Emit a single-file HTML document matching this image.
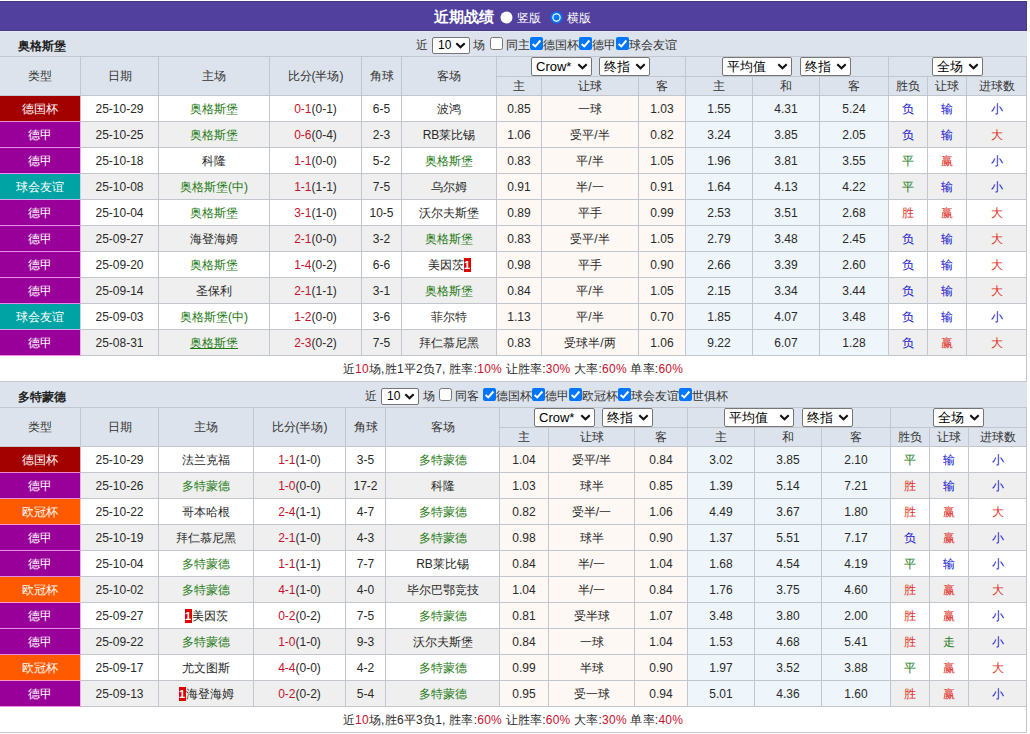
<!DOCTYPE html>
<html><head><meta charset="utf-8"><title>近期战绩</title><style>
*{box-sizing:border-box}
html,body{margin:0;padding:0;background:#fff}
body{width:1030px;height:734px;overflow:hidden;position:relative;font-family:"Liberation Sans",sans-serif;font-size:12px;color:#2a2a2a}
.bar{position:absolute;left:0;top:1px;width:1027px;height:30px;background:#52409e;border:1px solid #463a80;border-left:none}
.lav{position:absolute;left:0;top:31px;width:1027px;height:1px;background:#e6e6fa}
.bt{position:absolute;font-size:15px;font-weight:bold;line-height:28px;color:#fff;white-space:nowrap}
.rd{position:absolute;width:13px;height:13px}
.rd svg{display:block}
.rt{position:absolute;font-size:12px;line-height:13px;color:#fff;white-space:nowrap}
.c{position:absolute;border-right:1px solid #c2c7cd;border-bottom:1px solid #c2c7cd;text-align:center;white-space:nowrap;overflow:hidden}
.band{border-right:none}
.h{color:#333}
.lg{color:#fff;border-bottom-color:rgba(255,170,255,.8);border-right-color:rgba(255,235,255,.75)}
.g{color:#1f7a14}
.u{text-decoration:underline}
.sum{letter-spacing:0.23px}
.sc{color:#c8102e}
.sr{color:#c8102e}
.rc{display:inline-block;background:#e00000;color:#fff;font-weight:bold;font-size:11px;line-height:14px;height:14px;width:7px;text-align:center;vertical-align:middle;position:relative;top:-1px}
.tn{position:absolute;font-weight:bold;font-size:12px;color:#222;white-space:nowrap}
.ft{position:absolute;white-space:nowrap;color:#333;line-height:25px}
.sel{background:#fff;border:1px solid #767676;border-radius:2px;color:#000;white-space:nowrap;overflow:hidden}
.sel{position:absolute;text-align:left;padding-left:4px}
.chev{position:absolute;right:3px;top:50%;margin-top:-4px}
.sm .st{padding-left:1px}
.cb{position:absolute;width:13px;height:13px}
.cb svg{display:block}
</style></head>
<body>
<div class="bar"></div><div class="bt" style="left:434px;top:3px">近期战绩</div><div class="rd" style="left:500px;top:11px"><svg width="13" height="13" viewBox="0 0 13 13"><circle cx="6.5" cy="6.5" r="6" fill="#fff"/></svg></div><div class="rt" style="left:517px;top:12px">竖版</div><div class="rd" style="left:550px;top:11px"><svg width="13" height="13" viewBox="0 0 13 13"><circle cx="6.5" cy="6.5" r="6" fill="#0075ff"/><circle cx="6.5" cy="6.5" r="4.2" fill="#fff"/><circle cx="6.5" cy="6.5" r="3" fill="#0075ff"/></svg></div><div class="rt" style="left:567px;top:12px">横版</div>
<div class="c band" style="left:0px;top:31px;width:1027px;height:26px;line-height:26px;background:#dde3ec;border-right:none;width:1027px;"></div><div class="tn" style="left:18px;top:34px;height:25px;line-height:25px">奥格斯堡</div><div class="ft" style="left:416px;top:33px">近</div><div class="sel sm" style="left:432px;top:37px;width:38px;height:17px;line-height:15px;font-size:12px"><span class="st">10</span><svg class="chev" width="11" height="7" viewBox="0 0 11 7"><path d="M1.3 1.3 L5.5 5.3 L9.7 1.3" fill="none" stroke="#111" stroke-width="2.1"/></svg></div><div class="ft" style="left:473px;top:33px">场</div><div class="cb" style="left:490px;top:37px"><svg width="13" height="13" viewBox="0 0 13 13"><rect x="0.5" y="0.5" width="12" height="12" rx="2" fill="#fff" stroke="#767676"/></svg></div><div class="ft" style="left:506px;top:33px">同主</div><div class="cb" style="left:530px;top:37px"><svg width="13" height="13" viewBox="0 0 13 13"><rect x="0" y="0" width="13" height="13" rx="2" fill="#0075ff"/><path d="M2.6 6.9 L5.3 9.4 L10.4 3.5" fill="none" stroke="#fff" stroke-width="2"/></svg></div><div class="ft" style="left:543px;top:33px">德国杯</div><div class="cb" style="left:579px;top:37px"><svg width="13" height="13" viewBox="0 0 13 13"><rect x="0" y="0" width="13" height="13" rx="2" fill="#0075ff"/><path d="M2.6 6.9 L5.3 9.4 L10.4 3.5" fill="none" stroke="#fff" stroke-width="2"/></svg></div><div class="ft" style="left:592px;top:33px">德甲</div><div class="cb" style="left:616px;top:37px"><svg width="13" height="13" viewBox="0 0 13 13"><rect x="0" y="0" width="13" height="13" rx="2" fill="#0075ff"/><path d="M2.6 6.9 L5.3 9.4 L10.4 3.5" fill="none" stroke="#fff" stroke-width="2"/></svg></div><div class="ft" style="left:629px;top:33px">球会友谊</div><div class="c h" style="left:0px;top:57px;width:81px;height:39px;line-height:39px;background:#dde3ec;">类型</div><div class="c h" style="left:81px;top:57px;width:78px;height:39px;line-height:39px;background:#dde3ec;">日期</div><div class="c h" style="left:159px;top:57px;width:111px;height:39px;line-height:39px;background:#dde3ec;">主场</div><div class="c h" style="left:270px;top:57px;width:92px;height:39px;line-height:39px;background:#dde3ec;">比分(半场)</div><div class="c h" style="left:362px;top:57px;width:40px;height:39px;line-height:39px;background:#dde3ec;">角球</div><div class="c h" style="left:402px;top:57px;width:95px;height:39px;line-height:39px;background:#dde3ec;">客场</div><div class="c h" style="left:497px;top:57px;width:189px;height:20px;line-height:20px;background:#dde3ec;"></div><div class="c h" style="left:686px;top:57px;width:203px;height:20px;line-height:20px;background:#dde3ec;"></div><div class="c h" style="left:889px;top:57px;width:138px;height:20px;line-height:20px;background:#dde3ec;"></div><div class="c h" style="left:497px;top:77px;width:45px;height:19px;line-height:19px;background:#dde3ec;">主</div><div class="c h" style="left:542px;top:77px;width:97px;height:19px;line-height:19px;background:#dde3ec;">让球</div><div class="c h" style="left:639px;top:77px;width:47px;height:19px;line-height:19px;background:#dde3ec;">客</div><div class="c h" style="left:686px;top:77px;width:67px;height:19px;line-height:19px;background:#dde3ec;">主</div><div class="c h" style="left:753px;top:77px;width:67px;height:19px;line-height:19px;background:#dde3ec;">和</div><div class="c h" style="left:820px;top:77px;width:69px;height:19px;line-height:19px;background:#dde3ec;">客</div><div class="c h" style="left:889px;top:77px;width:39px;height:19px;line-height:19px;background:#dde3ec;">胜负</div><div class="c h" style="left:928px;top:77px;width:39px;height:19px;line-height:19px;background:#dde3ec;">让球</div><div class="c h" style="left:967px;top:77px;width:60px;height:19px;line-height:19px;background:#dde3ec;">进球数</div><div class="sel" style="left:531px;top:57px;width:61px;height:19px;line-height:17px;font-size:13px"><span class="st">Crow*</span><svg class="chev" width="11" height="7" viewBox="0 0 11 7"><path d="M1.3 1.3 L5.5 5.3 L9.7 1.3" fill="none" stroke="#111" stroke-width="2.1"/></svg></div><div class="sel" style="left:599px;top:57px;width:51px;height:19px;line-height:17px;font-size:13px"><span class="st">终指</span><svg class="chev" width="11" height="7" viewBox="0 0 11 7"><path d="M1.3 1.3 L5.5 5.3 L9.7 1.3" fill="none" stroke="#111" stroke-width="2.1"/></svg></div><div class="sel" style="left:722px;top:57px;width:70px;height:19px;line-height:17px;font-size:13px"><span class="st">平均值</span><svg class="chev" width="11" height="7" viewBox="0 0 11 7"><path d="M1.3 1.3 L5.5 5.3 L9.7 1.3" fill="none" stroke="#111" stroke-width="2.1"/></svg></div><div class="sel" style="left:800px;top:57px;width:51px;height:19px;line-height:17px;font-size:13px"><span class="st">终指</span><svg class="chev" width="11" height="7" viewBox="0 0 11 7"><path d="M1.3 1.3 L5.5 5.3 L9.7 1.3" fill="none" stroke="#111" stroke-width="2.1"/></svg></div><div class="sel" style="left:932px;top:57px;width:51px;height:19px;line-height:17px;font-size:13px"><span class="st">全场</span><svg class="chev" width="11" height="7" viewBox="0 0 11 7"><path d="M1.3 1.3 L5.5 5.3 L9.7 1.3" fill="none" stroke="#111" stroke-width="2.1"/></svg></div><div class="c lg" style="left:0px;top:96px;width:81px;height:26px;line-height:26px;background:#a30000;">德国杯</div><div class="c" style="left:81px;top:96px;width:78px;height:26px;line-height:26px;background:#ffffff;">25-10-29</div><div class="c" style="left:159px;top:96px;width:111px;height:26px;line-height:26px;background:#ffffff;"><span class="g">奥格斯堡</span></div><div class="c" style="left:270px;top:96px;width:92px;height:26px;line-height:26px;background:#ffffff;"><span class="sc">0-1</span>(0-1)</div><div class="c" style="left:362px;top:96px;width:40px;height:26px;line-height:26px;background:#ffffff;">6-5</div><div class="c" style="left:402px;top:96px;width:95px;height:26px;line-height:26px;background:#ffffff;">波鸿</div><div class="c" style="left:497px;top:96px;width:45px;height:26px;line-height:26px;background:#fdf8f4;">0.85</div><div class="c" style="left:542px;top:96px;width:97px;height:26px;line-height:26px;background:#fdf8f4;">一球</div><div class="c" style="left:639px;top:96px;width:47px;height:26px;line-height:26px;background:#fdf8f4;">1.03</div><div class="c" style="left:686px;top:96px;width:67px;height:26px;line-height:26px;background:#eef6fb;">1.55</div><div class="c" style="left:753px;top:96px;width:67px;height:26px;line-height:26px;background:#eef6fb;">4.31</div><div class="c" style="left:820px;top:96px;width:69px;height:26px;line-height:26px;background:#eef6fb;">5.24</div><div class="c" style="left:889px;top:96px;width:39px;height:26px;line-height:26px;background:#ffffff;"><span style="color:#1414c8">负</span></div><div class="c" style="left:928px;top:96px;width:39px;height:26px;line-height:26px;background:#ffffff;"><span style="color:#1414c8">输</span></div><div class="c" style="left:967px;top:96px;width:60px;height:26px;line-height:26px;background:#ffffff;"><span style="color:#1414c8">小</span></div><div class="c lg" style="left:0px;top:122px;width:81px;height:26px;line-height:26px;background:#990099;">德甲</div><div class="c" style="left:81px;top:122px;width:78px;height:26px;line-height:26px;background:#efefef;">25-10-25</div><div class="c" style="left:159px;top:122px;width:111px;height:26px;line-height:26px;background:#efefef;"><span class="g">奥格斯堡</span></div><div class="c" style="left:270px;top:122px;width:92px;height:26px;line-height:26px;background:#efefef;"><span class="sc">0-6</span>(0-4)</div><div class="c" style="left:362px;top:122px;width:40px;height:26px;line-height:26px;background:#efefef;">2-3</div><div class="c" style="left:402px;top:122px;width:95px;height:26px;line-height:26px;background:#efefef;">RB莱比锡</div><div class="c" style="left:497px;top:122px;width:45px;height:26px;line-height:26px;background:#fdf8f4;">1.06</div><div class="c" style="left:542px;top:122px;width:97px;height:26px;line-height:26px;background:#fdf8f4;">受平/半</div><div class="c" style="left:639px;top:122px;width:47px;height:26px;line-height:26px;background:#fdf8f4;">0.82</div><div class="c" style="left:686px;top:122px;width:67px;height:26px;line-height:26px;background:#eef6fb;">3.24</div><div class="c" style="left:753px;top:122px;width:67px;height:26px;line-height:26px;background:#eef6fb;">3.85</div><div class="c" style="left:820px;top:122px;width:69px;height:26px;line-height:26px;background:#eef6fb;">2.05</div><div class="c" style="left:889px;top:122px;width:39px;height:26px;line-height:26px;background:#efefef;"><span style="color:#1414c8">负</span></div><div class="c" style="left:928px;top:122px;width:39px;height:26px;line-height:26px;background:#efefef;"><span style="color:#1414c8">输</span></div><div class="c" style="left:967px;top:122px;width:60px;height:26px;line-height:26px;background:#efefef;"><span style="color:#e0301e">大</span></div><div class="c lg" style="left:0px;top:148px;width:81px;height:26px;line-height:26px;background:#990099;">德甲</div><div class="c" style="left:81px;top:148px;width:78px;height:26px;line-height:26px;background:#ffffff;">25-10-18</div><div class="c" style="left:159px;top:148px;width:111px;height:26px;line-height:26px;background:#ffffff;">科隆</div><div class="c" style="left:270px;top:148px;width:92px;height:26px;line-height:26px;background:#ffffff;"><span class="sc">1-1</span>(0-0)</div><div class="c" style="left:362px;top:148px;width:40px;height:26px;line-height:26px;background:#ffffff;">5-2</div><div class="c" style="left:402px;top:148px;width:95px;height:26px;line-height:26px;background:#ffffff;"><span class="g">奥格斯堡</span></div><div class="c" style="left:497px;top:148px;width:45px;height:26px;line-height:26px;background:#fdf8f4;">0.83</div><div class="c" style="left:542px;top:148px;width:97px;height:26px;line-height:26px;background:#fdf8f4;">平/半</div><div class="c" style="left:639px;top:148px;width:47px;height:26px;line-height:26px;background:#fdf8f4;">1.05</div><div class="c" style="left:686px;top:148px;width:67px;height:26px;line-height:26px;background:#eef6fb;">1.96</div><div class="c" style="left:753px;top:148px;width:67px;height:26px;line-height:26px;background:#eef6fb;">3.81</div><div class="c" style="left:820px;top:148px;width:69px;height:26px;line-height:26px;background:#eef6fb;">3.55</div><div class="c" style="left:889px;top:148px;width:39px;height:26px;line-height:26px;background:#ffffff;"><span style="color:#1a7a1a">平</span></div><div class="c" style="left:928px;top:148px;width:39px;height:26px;line-height:26px;background:#ffffff;"><span style="color:#e0301e">赢</span></div><div class="c" style="left:967px;top:148px;width:60px;height:26px;line-height:26px;background:#ffffff;"><span style="color:#1414c8">小</span></div><div class="c lg" style="left:0px;top:174px;width:81px;height:26px;line-height:26px;background:#00a3a3;">球会友谊</div><div class="c" style="left:81px;top:174px;width:78px;height:26px;line-height:26px;background:#efefef;">25-10-08</div><div class="c" style="left:159px;top:174px;width:111px;height:26px;line-height:26px;background:#efefef;"><span class="g">奥格斯堡(中)</span></div><div class="c" style="left:270px;top:174px;width:92px;height:26px;line-height:26px;background:#efefef;"><span class="sc">1-1</span>(1-1)</div><div class="c" style="left:362px;top:174px;width:40px;height:26px;line-height:26px;background:#efefef;">7-5</div><div class="c" style="left:402px;top:174px;width:95px;height:26px;line-height:26px;background:#efefef;">乌尔姆</div><div class="c" style="left:497px;top:174px;width:45px;height:26px;line-height:26px;background:#fdf8f4;">0.91</div><div class="c" style="left:542px;top:174px;width:97px;height:26px;line-height:26px;background:#fdf8f4;">半/一</div><div class="c" style="left:639px;top:174px;width:47px;height:26px;line-height:26px;background:#fdf8f4;">0.91</div><div class="c" style="left:686px;top:174px;width:67px;height:26px;line-height:26px;background:#eef6fb;">1.64</div><div class="c" style="left:753px;top:174px;width:67px;height:26px;line-height:26px;background:#eef6fb;">4.13</div><div class="c" style="left:820px;top:174px;width:69px;height:26px;line-height:26px;background:#eef6fb;">4.22</div><div class="c" style="left:889px;top:174px;width:39px;height:26px;line-height:26px;background:#efefef;"><span style="color:#1a7a1a">平</span></div><div class="c" style="left:928px;top:174px;width:39px;height:26px;line-height:26px;background:#efefef;"><span style="color:#1414c8">输</span></div><div class="c" style="left:967px;top:174px;width:60px;height:26px;line-height:26px;background:#efefef;"><span style="color:#1414c8">小</span></div><div class="c lg" style="left:0px;top:200px;width:81px;height:26px;line-height:26px;background:#990099;">德甲</div><div class="c" style="left:81px;top:200px;width:78px;height:26px;line-height:26px;background:#ffffff;">25-10-04</div><div class="c" style="left:159px;top:200px;width:111px;height:26px;line-height:26px;background:#ffffff;"><span class="g">奥格斯堡</span></div><div class="c" style="left:270px;top:200px;width:92px;height:26px;line-height:26px;background:#ffffff;"><span class="sc">3-1</span>(1-0)</div><div class="c" style="left:362px;top:200px;width:40px;height:26px;line-height:26px;background:#ffffff;">10-5</div><div class="c" style="left:402px;top:200px;width:95px;height:26px;line-height:26px;background:#ffffff;">沃尔夫斯堡</div><div class="c" style="left:497px;top:200px;width:45px;height:26px;line-height:26px;background:#fdf8f4;">0.89</div><div class="c" style="left:542px;top:200px;width:97px;height:26px;line-height:26px;background:#fdf8f4;">平手</div><div class="c" style="left:639px;top:200px;width:47px;height:26px;line-height:26px;background:#fdf8f4;">0.99</div><div class="c" style="left:686px;top:200px;width:67px;height:26px;line-height:26px;background:#eef6fb;">2.53</div><div class="c" style="left:753px;top:200px;width:67px;height:26px;line-height:26px;background:#eef6fb;">3.51</div><div class="c" style="left:820px;top:200px;width:69px;height:26px;line-height:26px;background:#eef6fb;">2.68</div><div class="c" style="left:889px;top:200px;width:39px;height:26px;line-height:26px;background:#ffffff;"><span style="color:#e0301e">胜</span></div><div class="c" style="left:928px;top:200px;width:39px;height:26px;line-height:26px;background:#ffffff;"><span style="color:#e0301e">赢</span></div><div class="c" style="left:967px;top:200px;width:60px;height:26px;line-height:26px;background:#ffffff;"><span style="color:#e0301e">大</span></div><div class="c lg" style="left:0px;top:226px;width:81px;height:26px;line-height:26px;background:#990099;">德甲</div><div class="c" style="left:81px;top:226px;width:78px;height:26px;line-height:26px;background:#efefef;">25-09-27</div><div class="c" style="left:159px;top:226px;width:111px;height:26px;line-height:26px;background:#efefef;">海登海姆</div><div class="c" style="left:270px;top:226px;width:92px;height:26px;line-height:26px;background:#efefef;"><span class="sc">2-1</span>(0-0)</div><div class="c" style="left:362px;top:226px;width:40px;height:26px;line-height:26px;background:#efefef;">3-2</div><div class="c" style="left:402px;top:226px;width:95px;height:26px;line-height:26px;background:#efefef;"><span class="g">奥格斯堡</span></div><div class="c" style="left:497px;top:226px;width:45px;height:26px;line-height:26px;background:#fdf8f4;">0.83</div><div class="c" style="left:542px;top:226px;width:97px;height:26px;line-height:26px;background:#fdf8f4;">受平/半</div><div class="c" style="left:639px;top:226px;width:47px;height:26px;line-height:26px;background:#fdf8f4;">1.05</div><div class="c" style="left:686px;top:226px;width:67px;height:26px;line-height:26px;background:#eef6fb;">2.79</div><div class="c" style="left:753px;top:226px;width:67px;height:26px;line-height:26px;background:#eef6fb;">3.48</div><div class="c" style="left:820px;top:226px;width:69px;height:26px;line-height:26px;background:#eef6fb;">2.45</div><div class="c" style="left:889px;top:226px;width:39px;height:26px;line-height:26px;background:#efefef;"><span style="color:#1414c8">负</span></div><div class="c" style="left:928px;top:226px;width:39px;height:26px;line-height:26px;background:#efefef;"><span style="color:#1414c8">输</span></div><div class="c" style="left:967px;top:226px;width:60px;height:26px;line-height:26px;background:#efefef;"><span style="color:#e0301e">大</span></div><div class="c lg" style="left:0px;top:252px;width:81px;height:26px;line-height:26px;background:#990099;">德甲</div><div class="c" style="left:81px;top:252px;width:78px;height:26px;line-height:26px;background:#ffffff;">25-09-20</div><div class="c" style="left:159px;top:252px;width:111px;height:26px;line-height:26px;background:#ffffff;"><span class="g">奥格斯堡</span></div><div class="c" style="left:270px;top:252px;width:92px;height:26px;line-height:26px;background:#ffffff;"><span class="sc">1-4</span>(0-2)</div><div class="c" style="left:362px;top:252px;width:40px;height:26px;line-height:26px;background:#ffffff;">6-6</div><div class="c" style="left:402px;top:252px;width:95px;height:26px;line-height:26px;background:#ffffff;">美因茨<span class="rc">1</span></div><div class="c" style="left:497px;top:252px;width:45px;height:26px;line-height:26px;background:#fdf8f4;">0.98</div><div class="c" style="left:542px;top:252px;width:97px;height:26px;line-height:26px;background:#fdf8f4;">平手</div><div class="c" style="left:639px;top:252px;width:47px;height:26px;line-height:26px;background:#fdf8f4;">0.90</div><div class="c" style="left:686px;top:252px;width:67px;height:26px;line-height:26px;background:#eef6fb;">2.66</div><div class="c" style="left:753px;top:252px;width:67px;height:26px;line-height:26px;background:#eef6fb;">3.39</div><div class="c" style="left:820px;top:252px;width:69px;height:26px;line-height:26px;background:#eef6fb;">2.60</div><div class="c" style="left:889px;top:252px;width:39px;height:26px;line-height:26px;background:#ffffff;"><span style="color:#1414c8">负</span></div><div class="c" style="left:928px;top:252px;width:39px;height:26px;line-height:26px;background:#ffffff;"><span style="color:#1414c8">输</span></div><div class="c" style="left:967px;top:252px;width:60px;height:26px;line-height:26px;background:#ffffff;"><span style="color:#e0301e">大</span></div><div class="c lg" style="left:0px;top:278px;width:81px;height:26px;line-height:26px;background:#990099;">德甲</div><div class="c" style="left:81px;top:278px;width:78px;height:26px;line-height:26px;background:#efefef;">25-09-14</div><div class="c" style="left:159px;top:278px;width:111px;height:26px;line-height:26px;background:#efefef;">圣保利</div><div class="c" style="left:270px;top:278px;width:92px;height:26px;line-height:26px;background:#efefef;"><span class="sc">2-1</span>(1-1)</div><div class="c" style="left:362px;top:278px;width:40px;height:26px;line-height:26px;background:#efefef;">3-1</div><div class="c" style="left:402px;top:278px;width:95px;height:26px;line-height:26px;background:#efefef;"><span class="g">奥格斯堡</span></div><div class="c" style="left:497px;top:278px;width:45px;height:26px;line-height:26px;background:#fdf8f4;">0.84</div><div class="c" style="left:542px;top:278px;width:97px;height:26px;line-height:26px;background:#fdf8f4;">平/半</div><div class="c" style="left:639px;top:278px;width:47px;height:26px;line-height:26px;background:#fdf8f4;">1.05</div><div class="c" style="left:686px;top:278px;width:67px;height:26px;line-height:26px;background:#eef6fb;">2.15</div><div class="c" style="left:753px;top:278px;width:67px;height:26px;line-height:26px;background:#eef6fb;">3.34</div><div class="c" style="left:820px;top:278px;width:69px;height:26px;line-height:26px;background:#eef6fb;">3.44</div><div class="c" style="left:889px;top:278px;width:39px;height:26px;line-height:26px;background:#efefef;"><span style="color:#1414c8">负</span></div><div class="c" style="left:928px;top:278px;width:39px;height:26px;line-height:26px;background:#efefef;"><span style="color:#1414c8">输</span></div><div class="c" style="left:967px;top:278px;width:60px;height:26px;line-height:26px;background:#efefef;"><span style="color:#e0301e">大</span></div><div class="c lg" style="left:0px;top:304px;width:81px;height:26px;line-height:26px;background:#00a3a3;">球会友谊</div><div class="c" style="left:81px;top:304px;width:78px;height:26px;line-height:26px;background:#ffffff;">25-09-03</div><div class="c" style="left:159px;top:304px;width:111px;height:26px;line-height:26px;background:#ffffff;"><span class="g">奥格斯堡(中)</span></div><div class="c" style="left:270px;top:304px;width:92px;height:26px;line-height:26px;background:#ffffff;"><span class="sc">1-2</span>(0-0)</div><div class="c" style="left:362px;top:304px;width:40px;height:26px;line-height:26px;background:#ffffff;">3-6</div><div class="c" style="left:402px;top:304px;width:95px;height:26px;line-height:26px;background:#ffffff;">菲尔特</div><div class="c" style="left:497px;top:304px;width:45px;height:26px;line-height:26px;background:#fdf8f4;">1.13</div><div class="c" style="left:542px;top:304px;width:97px;height:26px;line-height:26px;background:#fdf8f4;">平/半</div><div class="c" style="left:639px;top:304px;width:47px;height:26px;line-height:26px;background:#fdf8f4;">0.70</div><div class="c" style="left:686px;top:304px;width:67px;height:26px;line-height:26px;background:#eef6fb;">1.85</div><div class="c" style="left:753px;top:304px;width:67px;height:26px;line-height:26px;background:#eef6fb;">4.07</div><div class="c" style="left:820px;top:304px;width:69px;height:26px;line-height:26px;background:#eef6fb;">3.48</div><div class="c" style="left:889px;top:304px;width:39px;height:26px;line-height:26px;background:#ffffff;"><span style="color:#1414c8">负</span></div><div class="c" style="left:928px;top:304px;width:39px;height:26px;line-height:26px;background:#ffffff;"><span style="color:#1414c8">输</span></div><div class="c" style="left:967px;top:304px;width:60px;height:26px;line-height:26px;background:#ffffff;"><span style="color:#1414c8">小</span></div><div class="c lg" style="left:0px;top:330px;width:81px;height:26px;line-height:26px;background:#990099;">德甲</div><div class="c" style="left:81px;top:330px;width:78px;height:26px;line-height:26px;background:#efefef;">25-08-31</div><div class="c" style="left:159px;top:330px;width:111px;height:26px;line-height:26px;background:#efefef;"><span class="g u">奥格斯堡</span></div><div class="c" style="left:270px;top:330px;width:92px;height:26px;line-height:26px;background:#efefef;"><span class="sc">2-3</span>(0-2)</div><div class="c" style="left:362px;top:330px;width:40px;height:26px;line-height:26px;background:#efefef;">7-5</div><div class="c" style="left:402px;top:330px;width:95px;height:26px;line-height:26px;background:#efefef;">拜仁慕尼黑</div><div class="c" style="left:497px;top:330px;width:45px;height:26px;line-height:26px;background:#fdf8f4;">0.83</div><div class="c" style="left:542px;top:330px;width:97px;height:26px;line-height:26px;background:#fdf8f4;">受球半/两</div><div class="c" style="left:639px;top:330px;width:47px;height:26px;line-height:26px;background:#fdf8f4;">1.06</div><div class="c" style="left:686px;top:330px;width:67px;height:26px;line-height:26px;background:#eef6fb;">9.22</div><div class="c" style="left:753px;top:330px;width:67px;height:26px;line-height:26px;background:#eef6fb;">6.07</div><div class="c" style="left:820px;top:330px;width:69px;height:26px;line-height:26px;background:#eef6fb;">1.28</div><div class="c" style="left:889px;top:330px;width:39px;height:26px;line-height:26px;background:#efefef;"><span style="color:#1414c8">负</span></div><div class="c" style="left:928px;top:330px;width:39px;height:26px;line-height:26px;background:#efefef;"><span style="color:#e0301e">赢</span></div><div class="c" style="left:967px;top:330px;width:60px;height:26px;line-height:26px;background:#efefef;"><span style="color:#e0301e">大</span></div><div class="c sum" style="left:0px;top:356px;width:1027px;height:26px;line-height:26px;background:#ffffff;">近<span class="sr">10</span>场,胜1平2负7, 胜率:<span class="sr">10%</span> 让胜率:<span class="sr">30%</span> 大率:<span class="sr">60%</span> 单率:<span class="sr">60%</span></div><div class="c band" style="left:0px;top:382px;width:1027px;height:26px;line-height:26px;background:#dde3ec;border-right:none;width:1027px;"></div><div class="tn" style="left:18px;top:385px;height:25px;line-height:25px">多特蒙德</div><div class="ft" style="left:365px;top:384px">近</div><div class="sel sm" style="left:381px;top:388px;width:38px;height:17px;line-height:15px;font-size:12px"><span class="st">10</span><svg class="chev" width="11" height="7" viewBox="0 0 11 7"><path d="M1.3 1.3 L5.5 5.3 L9.7 1.3" fill="none" stroke="#111" stroke-width="2.1"/></svg></div><div class="ft" style="left:423px;top:384px">场</div><div class="cb" style="left:439px;top:388px"><svg width="13" height="13" viewBox="0 0 13 13"><rect x="0.5" y="0.5" width="12" height="12" rx="2" fill="#fff" stroke="#767676"/></svg></div><div class="ft" style="left:455px;top:384px">同客</div><div class="cb" style="left:483px;top:388px"><svg width="13" height="13" viewBox="0 0 13 13"><rect x="0" y="0" width="13" height="13" rx="2" fill="#0075ff"/><path d="M2.6 6.9 L5.3 9.4 L10.4 3.5" fill="none" stroke="#fff" stroke-width="2"/></svg></div><div class="ft" style="left:496px;top:384px">德国杯</div><div class="cb" style="left:532px;top:388px"><svg width="13" height="13" viewBox="0 0 13 13"><rect x="0" y="0" width="13" height="13" rx="2" fill="#0075ff"/><path d="M2.6 6.9 L5.3 9.4 L10.4 3.5" fill="none" stroke="#fff" stroke-width="2"/></svg></div><div class="ft" style="left:545px;top:384px">德甲</div><div class="cb" style="left:569px;top:388px"><svg width="13" height="13" viewBox="0 0 13 13"><rect x="0" y="0" width="13" height="13" rx="2" fill="#0075ff"/><path d="M2.6 6.9 L5.3 9.4 L10.4 3.5" fill="none" stroke="#fff" stroke-width="2"/></svg></div><div class="ft" style="left:582px;top:384px">欧冠杯</div><div class="cb" style="left:618px;top:388px"><svg width="13" height="13" viewBox="0 0 13 13"><rect x="0" y="0" width="13" height="13" rx="2" fill="#0075ff"/><path d="M2.6 6.9 L5.3 9.4 L10.4 3.5" fill="none" stroke="#fff" stroke-width="2"/></svg></div><div class="ft" style="left:631px;top:384px">球会友谊</div><div class="cb" style="left:679px;top:388px"><svg width="13" height="13" viewBox="0 0 13 13"><rect x="0" y="0" width="13" height="13" rx="2" fill="#0075ff"/><path d="M2.6 6.9 L5.3 9.4 L10.4 3.5" fill="none" stroke="#fff" stroke-width="2"/></svg></div><div class="ft" style="left:692px;top:384px">世俱杯</div><div class="c h" style="left:0px;top:408px;width:81px;height:39px;line-height:39px;background:#dde3ec;">类型</div><div class="c h" style="left:81px;top:408px;width:78px;height:39px;line-height:39px;background:#dde3ec;">日期</div><div class="c h" style="left:159px;top:408px;width:95px;height:39px;line-height:39px;background:#dde3ec;">主场</div><div class="c h" style="left:254px;top:408px;width:92px;height:39px;line-height:39px;background:#dde3ec;">比分(半场)</div><div class="c h" style="left:346px;top:408px;width:40px;height:39px;line-height:39px;background:#dde3ec;">角球</div><div class="c h" style="left:386px;top:408px;width:114px;height:39px;line-height:39px;background:#dde3ec;">客场</div><div class="c h" style="left:500px;top:408px;width:188px;height:20px;line-height:20px;background:#dde3ec;"></div><div class="c h" style="left:688px;top:408px;width:203px;height:20px;line-height:20px;background:#dde3ec;"></div><div class="c h" style="left:891px;top:408px;width:136px;height:20px;line-height:20px;background:#dde3ec;"></div><div class="c h" style="left:500px;top:428px;width:49px;height:19px;line-height:19px;background:#dde3ec;">主</div><div class="c h" style="left:549px;top:428px;width:86px;height:19px;line-height:19px;background:#dde3ec;">让球</div><div class="c h" style="left:635px;top:428px;width:53px;height:19px;line-height:19px;background:#dde3ec;">客</div><div class="c h" style="left:688px;top:428px;width:67px;height:19px;line-height:19px;background:#dde3ec;">主</div><div class="c h" style="left:755px;top:428px;width:67px;height:19px;line-height:19px;background:#dde3ec;">和</div><div class="c h" style="left:822px;top:428px;width:69px;height:19px;line-height:19px;background:#dde3ec;">客</div><div class="c h" style="left:891px;top:428px;width:39px;height:19px;line-height:19px;background:#dde3ec;">胜负</div><div class="c h" style="left:930px;top:428px;width:39px;height:19px;line-height:19px;background:#dde3ec;">让球</div><div class="c h" style="left:969px;top:428px;width:58px;height:19px;line-height:19px;background:#dde3ec;">进球数</div><div class="sel" style="left:534px;top:408px;width:61px;height:19px;line-height:17px;font-size:13px"><span class="st">Crow*</span><svg class="chev" width="11" height="7" viewBox="0 0 11 7"><path d="M1.3 1.3 L5.5 5.3 L9.7 1.3" fill="none" stroke="#111" stroke-width="2.1"/></svg></div><div class="sel" style="left:602px;top:408px;width:51px;height:19px;line-height:17px;font-size:13px"><span class="st">终指</span><svg class="chev" width="11" height="7" viewBox="0 0 11 7"><path d="M1.3 1.3 L5.5 5.3 L9.7 1.3" fill="none" stroke="#111" stroke-width="2.1"/></svg></div><div class="sel" style="left:724px;top:408px;width:70px;height:19px;line-height:17px;font-size:13px"><span class="st">平均值</span><svg class="chev" width="11" height="7" viewBox="0 0 11 7"><path d="M1.3 1.3 L5.5 5.3 L9.7 1.3" fill="none" stroke="#111" stroke-width="2.1"/></svg></div><div class="sel" style="left:802px;top:408px;width:51px;height:19px;line-height:17px;font-size:13px"><span class="st">终指</span><svg class="chev" width="11" height="7" viewBox="0 0 11 7"><path d="M1.3 1.3 L5.5 5.3 L9.7 1.3" fill="none" stroke="#111" stroke-width="2.1"/></svg></div><div class="sel" style="left:933px;top:408px;width:51px;height:19px;line-height:17px;font-size:13px"><span class="st">全场</span><svg class="chev" width="11" height="7" viewBox="0 0 11 7"><path d="M1.3 1.3 L5.5 5.3 L9.7 1.3" fill="none" stroke="#111" stroke-width="2.1"/></svg></div><div class="c lg" style="left:0px;top:447px;width:81px;height:26px;line-height:26px;background:#a30000;">德国杯</div><div class="c" style="left:81px;top:447px;width:78px;height:26px;line-height:26px;background:#ffffff;">25-10-29</div><div class="c" style="left:159px;top:447px;width:95px;height:26px;line-height:26px;background:#ffffff;">法兰克福</div><div class="c" style="left:254px;top:447px;width:92px;height:26px;line-height:26px;background:#ffffff;"><span class="sc">1-1</span>(1-0)</div><div class="c" style="left:346px;top:447px;width:40px;height:26px;line-height:26px;background:#ffffff;">3-5</div><div class="c" style="left:386px;top:447px;width:114px;height:26px;line-height:26px;background:#ffffff;"><span class="g">多特蒙德</span></div><div class="c" style="left:500px;top:447px;width:49px;height:26px;line-height:26px;background:#fdf8f4;">1.04</div><div class="c" style="left:549px;top:447px;width:86px;height:26px;line-height:26px;background:#fdf8f4;">受平/半</div><div class="c" style="left:635px;top:447px;width:53px;height:26px;line-height:26px;background:#fdf8f4;">0.84</div><div class="c" style="left:688px;top:447px;width:67px;height:26px;line-height:26px;background:#eef6fb;">3.02</div><div class="c" style="left:755px;top:447px;width:67px;height:26px;line-height:26px;background:#eef6fb;">3.85</div><div class="c" style="left:822px;top:447px;width:69px;height:26px;line-height:26px;background:#eef6fb;">2.10</div><div class="c" style="left:891px;top:447px;width:39px;height:26px;line-height:26px;background:#ffffff;"><span style="color:#1a7a1a">平</span></div><div class="c" style="left:930px;top:447px;width:39px;height:26px;line-height:26px;background:#ffffff;"><span style="color:#1414c8">输</span></div><div class="c" style="left:969px;top:447px;width:58px;height:26px;line-height:26px;background:#ffffff;"><span style="color:#1414c8">小</span></div><div class="c lg" style="left:0px;top:473px;width:81px;height:26px;line-height:26px;background:#990099;">德甲</div><div class="c" style="left:81px;top:473px;width:78px;height:26px;line-height:26px;background:#efefef;">25-10-26</div><div class="c" style="left:159px;top:473px;width:95px;height:26px;line-height:26px;background:#efefef;"><span class="g">多特蒙德</span></div><div class="c" style="left:254px;top:473px;width:92px;height:26px;line-height:26px;background:#efefef;"><span class="sc">1-0</span>(0-0)</div><div class="c" style="left:346px;top:473px;width:40px;height:26px;line-height:26px;background:#efefef;">17-2</div><div class="c" style="left:386px;top:473px;width:114px;height:26px;line-height:26px;background:#efefef;">科隆</div><div class="c" style="left:500px;top:473px;width:49px;height:26px;line-height:26px;background:#fdf8f4;">1.03</div><div class="c" style="left:549px;top:473px;width:86px;height:26px;line-height:26px;background:#fdf8f4;">球半</div><div class="c" style="left:635px;top:473px;width:53px;height:26px;line-height:26px;background:#fdf8f4;">0.85</div><div class="c" style="left:688px;top:473px;width:67px;height:26px;line-height:26px;background:#eef6fb;">1.39</div><div class="c" style="left:755px;top:473px;width:67px;height:26px;line-height:26px;background:#eef6fb;">5.14</div><div class="c" style="left:822px;top:473px;width:69px;height:26px;line-height:26px;background:#eef6fb;">7.21</div><div class="c" style="left:891px;top:473px;width:39px;height:26px;line-height:26px;background:#efefef;"><span style="color:#e0301e">胜</span></div><div class="c" style="left:930px;top:473px;width:39px;height:26px;line-height:26px;background:#efefef;"><span style="color:#1414c8">输</span></div><div class="c" style="left:969px;top:473px;width:58px;height:26px;line-height:26px;background:#efefef;"><span style="color:#1414c8">小</span></div><div class="c lg" style="left:0px;top:499px;width:81px;height:26px;line-height:26px;background:#ff5a00;">欧冠杯</div><div class="c" style="left:81px;top:499px;width:78px;height:26px;line-height:26px;background:#ffffff;">25-10-22</div><div class="c" style="left:159px;top:499px;width:95px;height:26px;line-height:26px;background:#ffffff;">哥本哈根</div><div class="c" style="left:254px;top:499px;width:92px;height:26px;line-height:26px;background:#ffffff;"><span class="sc">2-4</span>(1-1)</div><div class="c" style="left:346px;top:499px;width:40px;height:26px;line-height:26px;background:#ffffff;">4-7</div><div class="c" style="left:386px;top:499px;width:114px;height:26px;line-height:26px;background:#ffffff;"><span class="g">多特蒙德</span></div><div class="c" style="left:500px;top:499px;width:49px;height:26px;line-height:26px;background:#fdf8f4;">0.82</div><div class="c" style="left:549px;top:499px;width:86px;height:26px;line-height:26px;background:#fdf8f4;">受半/一</div><div class="c" style="left:635px;top:499px;width:53px;height:26px;line-height:26px;background:#fdf8f4;">1.06</div><div class="c" style="left:688px;top:499px;width:67px;height:26px;line-height:26px;background:#eef6fb;">4.49</div><div class="c" style="left:755px;top:499px;width:67px;height:26px;line-height:26px;background:#eef6fb;">3.67</div><div class="c" style="left:822px;top:499px;width:69px;height:26px;line-height:26px;background:#eef6fb;">1.80</div><div class="c" style="left:891px;top:499px;width:39px;height:26px;line-height:26px;background:#ffffff;"><span style="color:#e0301e">胜</span></div><div class="c" style="left:930px;top:499px;width:39px;height:26px;line-height:26px;background:#ffffff;"><span style="color:#e0301e">赢</span></div><div class="c" style="left:969px;top:499px;width:58px;height:26px;line-height:26px;background:#ffffff;"><span style="color:#e0301e">大</span></div><div class="c lg" style="left:0px;top:525px;width:81px;height:26px;line-height:26px;background:#990099;">德甲</div><div class="c" style="left:81px;top:525px;width:78px;height:26px;line-height:26px;background:#efefef;">25-10-19</div><div class="c" style="left:159px;top:525px;width:95px;height:26px;line-height:26px;background:#efefef;">拜仁慕尼黑</div><div class="c" style="left:254px;top:525px;width:92px;height:26px;line-height:26px;background:#efefef;"><span class="sc">2-1</span>(1-0)</div><div class="c" style="left:346px;top:525px;width:40px;height:26px;line-height:26px;background:#efefef;">4-3</div><div class="c" style="left:386px;top:525px;width:114px;height:26px;line-height:26px;background:#efefef;"><span class="g">多特蒙德</span></div><div class="c" style="left:500px;top:525px;width:49px;height:26px;line-height:26px;background:#fdf8f4;">0.98</div><div class="c" style="left:549px;top:525px;width:86px;height:26px;line-height:26px;background:#fdf8f4;">球半</div><div class="c" style="left:635px;top:525px;width:53px;height:26px;line-height:26px;background:#fdf8f4;">0.90</div><div class="c" style="left:688px;top:525px;width:67px;height:26px;line-height:26px;background:#eef6fb;">1.37</div><div class="c" style="left:755px;top:525px;width:67px;height:26px;line-height:26px;background:#eef6fb;">5.51</div><div class="c" style="left:822px;top:525px;width:69px;height:26px;line-height:26px;background:#eef6fb;">7.17</div><div class="c" style="left:891px;top:525px;width:39px;height:26px;line-height:26px;background:#efefef;"><span style="color:#1414c8">负</span></div><div class="c" style="left:930px;top:525px;width:39px;height:26px;line-height:26px;background:#efefef;"><span style="color:#e0301e">赢</span></div><div class="c" style="left:969px;top:525px;width:58px;height:26px;line-height:26px;background:#efefef;"><span style="color:#1414c8">小</span></div><div class="c lg" style="left:0px;top:551px;width:81px;height:26px;line-height:26px;background:#990099;">德甲</div><div class="c" style="left:81px;top:551px;width:78px;height:26px;line-height:26px;background:#ffffff;">25-10-04</div><div class="c" style="left:159px;top:551px;width:95px;height:26px;line-height:26px;background:#ffffff;"><span class="g">多特蒙德</span></div><div class="c" style="left:254px;top:551px;width:92px;height:26px;line-height:26px;background:#ffffff;"><span class="sc">1-1</span>(1-1)</div><div class="c" style="left:346px;top:551px;width:40px;height:26px;line-height:26px;background:#ffffff;">7-7</div><div class="c" style="left:386px;top:551px;width:114px;height:26px;line-height:26px;background:#ffffff;">RB莱比锡</div><div class="c" style="left:500px;top:551px;width:49px;height:26px;line-height:26px;background:#fdf8f4;">0.84</div><div class="c" style="left:549px;top:551px;width:86px;height:26px;line-height:26px;background:#fdf8f4;">半/一</div><div class="c" style="left:635px;top:551px;width:53px;height:26px;line-height:26px;background:#fdf8f4;">1.04</div><div class="c" style="left:688px;top:551px;width:67px;height:26px;line-height:26px;background:#eef6fb;">1.68</div><div class="c" style="left:755px;top:551px;width:67px;height:26px;line-height:26px;background:#eef6fb;">4.54</div><div class="c" style="left:822px;top:551px;width:69px;height:26px;line-height:26px;background:#eef6fb;">4.19</div><div class="c" style="left:891px;top:551px;width:39px;height:26px;line-height:26px;background:#ffffff;"><span style="color:#1a7a1a">平</span></div><div class="c" style="left:930px;top:551px;width:39px;height:26px;line-height:26px;background:#ffffff;"><span style="color:#1414c8">输</span></div><div class="c" style="left:969px;top:551px;width:58px;height:26px;line-height:26px;background:#ffffff;"><span style="color:#1414c8">小</span></div><div class="c lg" style="left:0px;top:577px;width:81px;height:26px;line-height:26px;background:#ff5a00;">欧冠杯</div><div class="c" style="left:81px;top:577px;width:78px;height:26px;line-height:26px;background:#efefef;">25-10-02</div><div class="c" style="left:159px;top:577px;width:95px;height:26px;line-height:26px;background:#efefef;"><span class="g">多特蒙德</span></div><div class="c" style="left:254px;top:577px;width:92px;height:26px;line-height:26px;background:#efefef;"><span class="sc">4-1</span>(1-0)</div><div class="c" style="left:346px;top:577px;width:40px;height:26px;line-height:26px;background:#efefef;">4-0</div><div class="c" style="left:386px;top:577px;width:114px;height:26px;line-height:26px;background:#efefef;">毕尔巴鄂竞技</div><div class="c" style="left:500px;top:577px;width:49px;height:26px;line-height:26px;background:#fdf8f4;">1.04</div><div class="c" style="left:549px;top:577px;width:86px;height:26px;line-height:26px;background:#fdf8f4;">半/一</div><div class="c" style="left:635px;top:577px;width:53px;height:26px;line-height:26px;background:#fdf8f4;">0.84</div><div class="c" style="left:688px;top:577px;width:67px;height:26px;line-height:26px;background:#eef6fb;">1.76</div><div class="c" style="left:755px;top:577px;width:67px;height:26px;line-height:26px;background:#eef6fb;">3.75</div><div class="c" style="left:822px;top:577px;width:69px;height:26px;line-height:26px;background:#eef6fb;">4.60</div><div class="c" style="left:891px;top:577px;width:39px;height:26px;line-height:26px;background:#efefef;"><span style="color:#e0301e">胜</span></div><div class="c" style="left:930px;top:577px;width:39px;height:26px;line-height:26px;background:#efefef;"><span style="color:#e0301e">赢</span></div><div class="c" style="left:969px;top:577px;width:58px;height:26px;line-height:26px;background:#efefef;"><span style="color:#e0301e">大</span></div><div class="c lg" style="left:0px;top:603px;width:81px;height:26px;line-height:26px;background:#990099;">德甲</div><div class="c" style="left:81px;top:603px;width:78px;height:26px;line-height:26px;background:#ffffff;">25-09-27</div><div class="c" style="left:159px;top:603px;width:95px;height:26px;line-height:26px;background:#ffffff;"><span class="rc">1</span>美因茨</div><div class="c" style="left:254px;top:603px;width:92px;height:26px;line-height:26px;background:#ffffff;"><span class="sc">0-2</span>(0-2)</div><div class="c" style="left:346px;top:603px;width:40px;height:26px;line-height:26px;background:#ffffff;">7-5</div><div class="c" style="left:386px;top:603px;width:114px;height:26px;line-height:26px;background:#ffffff;"><span class="g">多特蒙德</span></div><div class="c" style="left:500px;top:603px;width:49px;height:26px;line-height:26px;background:#fdf8f4;">0.81</div><div class="c" style="left:549px;top:603px;width:86px;height:26px;line-height:26px;background:#fdf8f4;">受半球</div><div class="c" style="left:635px;top:603px;width:53px;height:26px;line-height:26px;background:#fdf8f4;">1.07</div><div class="c" style="left:688px;top:603px;width:67px;height:26px;line-height:26px;background:#eef6fb;">3.48</div><div class="c" style="left:755px;top:603px;width:67px;height:26px;line-height:26px;background:#eef6fb;">3.80</div><div class="c" style="left:822px;top:603px;width:69px;height:26px;line-height:26px;background:#eef6fb;">2.00</div><div class="c" style="left:891px;top:603px;width:39px;height:26px;line-height:26px;background:#ffffff;"><span style="color:#e0301e">胜</span></div><div class="c" style="left:930px;top:603px;width:39px;height:26px;line-height:26px;background:#ffffff;"><span style="color:#e0301e">赢</span></div><div class="c" style="left:969px;top:603px;width:58px;height:26px;line-height:26px;background:#ffffff;"><span style="color:#1414c8">小</span></div><div class="c lg" style="left:0px;top:629px;width:81px;height:26px;line-height:26px;background:#990099;">德甲</div><div class="c" style="left:81px;top:629px;width:78px;height:26px;line-height:26px;background:#efefef;">25-09-22</div><div class="c" style="left:159px;top:629px;width:95px;height:26px;line-height:26px;background:#efefef;"><span class="g">多特蒙德</span></div><div class="c" style="left:254px;top:629px;width:92px;height:26px;line-height:26px;background:#efefef;"><span class="sc">1-0</span>(1-0)</div><div class="c" style="left:346px;top:629px;width:40px;height:26px;line-height:26px;background:#efefef;">9-3</div><div class="c" style="left:386px;top:629px;width:114px;height:26px;line-height:26px;background:#efefef;">沃尔夫斯堡</div><div class="c" style="left:500px;top:629px;width:49px;height:26px;line-height:26px;background:#fdf8f4;">0.84</div><div class="c" style="left:549px;top:629px;width:86px;height:26px;line-height:26px;background:#fdf8f4;">一球</div><div class="c" style="left:635px;top:629px;width:53px;height:26px;line-height:26px;background:#fdf8f4;">1.04</div><div class="c" style="left:688px;top:629px;width:67px;height:26px;line-height:26px;background:#eef6fb;">1.53</div><div class="c" style="left:755px;top:629px;width:67px;height:26px;line-height:26px;background:#eef6fb;">4.68</div><div class="c" style="left:822px;top:629px;width:69px;height:26px;line-height:26px;background:#eef6fb;">5.41</div><div class="c" style="left:891px;top:629px;width:39px;height:26px;line-height:26px;background:#efefef;"><span style="color:#e0301e">胜</span></div><div class="c" style="left:930px;top:629px;width:39px;height:26px;line-height:26px;background:#efefef;"><span style="color:#1a7a1a">走</span></div><div class="c" style="left:969px;top:629px;width:58px;height:26px;line-height:26px;background:#efefef;"><span style="color:#1414c8">小</span></div><div class="c lg" style="left:0px;top:655px;width:81px;height:26px;line-height:26px;background:#ff5a00;">欧冠杯</div><div class="c" style="left:81px;top:655px;width:78px;height:26px;line-height:26px;background:#ffffff;">25-09-17</div><div class="c" style="left:159px;top:655px;width:95px;height:26px;line-height:26px;background:#ffffff;">尤文图斯</div><div class="c" style="left:254px;top:655px;width:92px;height:26px;line-height:26px;background:#ffffff;"><span class="sc">4-4</span>(0-0)</div><div class="c" style="left:346px;top:655px;width:40px;height:26px;line-height:26px;background:#ffffff;">4-2</div><div class="c" style="left:386px;top:655px;width:114px;height:26px;line-height:26px;background:#ffffff;"><span class="g">多特蒙德</span></div><div class="c" style="left:500px;top:655px;width:49px;height:26px;line-height:26px;background:#fdf8f4;">0.99</div><div class="c" style="left:549px;top:655px;width:86px;height:26px;line-height:26px;background:#fdf8f4;">半球</div><div class="c" style="left:635px;top:655px;width:53px;height:26px;line-height:26px;background:#fdf8f4;">0.90</div><div class="c" style="left:688px;top:655px;width:67px;height:26px;line-height:26px;background:#eef6fb;">1.97</div><div class="c" style="left:755px;top:655px;width:67px;height:26px;line-height:26px;background:#eef6fb;">3.52</div><div class="c" style="left:822px;top:655px;width:69px;height:26px;line-height:26px;background:#eef6fb;">3.88</div><div class="c" style="left:891px;top:655px;width:39px;height:26px;line-height:26px;background:#ffffff;"><span style="color:#1a7a1a">平</span></div><div class="c" style="left:930px;top:655px;width:39px;height:26px;line-height:26px;background:#ffffff;"><span style="color:#e0301e">赢</span></div><div class="c" style="left:969px;top:655px;width:58px;height:26px;line-height:26px;background:#ffffff;"><span style="color:#e0301e">大</span></div><div class="c lg" style="left:0px;top:681px;width:81px;height:26px;line-height:26px;background:#990099;">德甲</div><div class="c" style="left:81px;top:681px;width:78px;height:26px;line-height:26px;background:#efefef;">25-09-13</div><div class="c" style="left:159px;top:681px;width:95px;height:26px;line-height:26px;background:#efefef;"><span class="rc">1</span>海登海姆</div><div class="c" style="left:254px;top:681px;width:92px;height:26px;line-height:26px;background:#efefef;"><span class="sc">0-2</span>(0-2)</div><div class="c" style="left:346px;top:681px;width:40px;height:26px;line-height:26px;background:#efefef;">5-4</div><div class="c" style="left:386px;top:681px;width:114px;height:26px;line-height:26px;background:#efefef;"><span class="g">多特蒙德</span></div><div class="c" style="left:500px;top:681px;width:49px;height:26px;line-height:26px;background:#fdf8f4;">0.95</div><div class="c" style="left:549px;top:681px;width:86px;height:26px;line-height:26px;background:#fdf8f4;">受一球</div><div class="c" style="left:635px;top:681px;width:53px;height:26px;line-height:26px;background:#fdf8f4;">0.94</div><div class="c" style="left:688px;top:681px;width:67px;height:26px;line-height:26px;background:#eef6fb;">5.01</div><div class="c" style="left:755px;top:681px;width:67px;height:26px;line-height:26px;background:#eef6fb;">4.36</div><div class="c" style="left:822px;top:681px;width:69px;height:26px;line-height:26px;background:#eef6fb;">1.60</div><div class="c" style="left:891px;top:681px;width:39px;height:26px;line-height:26px;background:#efefef;"><span style="color:#e0301e">胜</span></div><div class="c" style="left:930px;top:681px;width:39px;height:26px;line-height:26px;background:#efefef;"><span style="color:#e0301e">赢</span></div><div class="c" style="left:969px;top:681px;width:58px;height:26px;line-height:26px;background:#efefef;"><span style="color:#1414c8">小</span></div><div class="c sum" style="left:0px;top:707px;width:1027px;height:26px;line-height:26px;background:#ffffff;">近<span class="sr">10</span>场,胜6平3负1, 胜率:<span class="sr">60%</span> 让胜率:<span class="sr">60%</span> 大率:<span class="sr">30%</span> 单率:<span class="sr">40%</span></div>
<div class="lav"></div>
</body></html>
